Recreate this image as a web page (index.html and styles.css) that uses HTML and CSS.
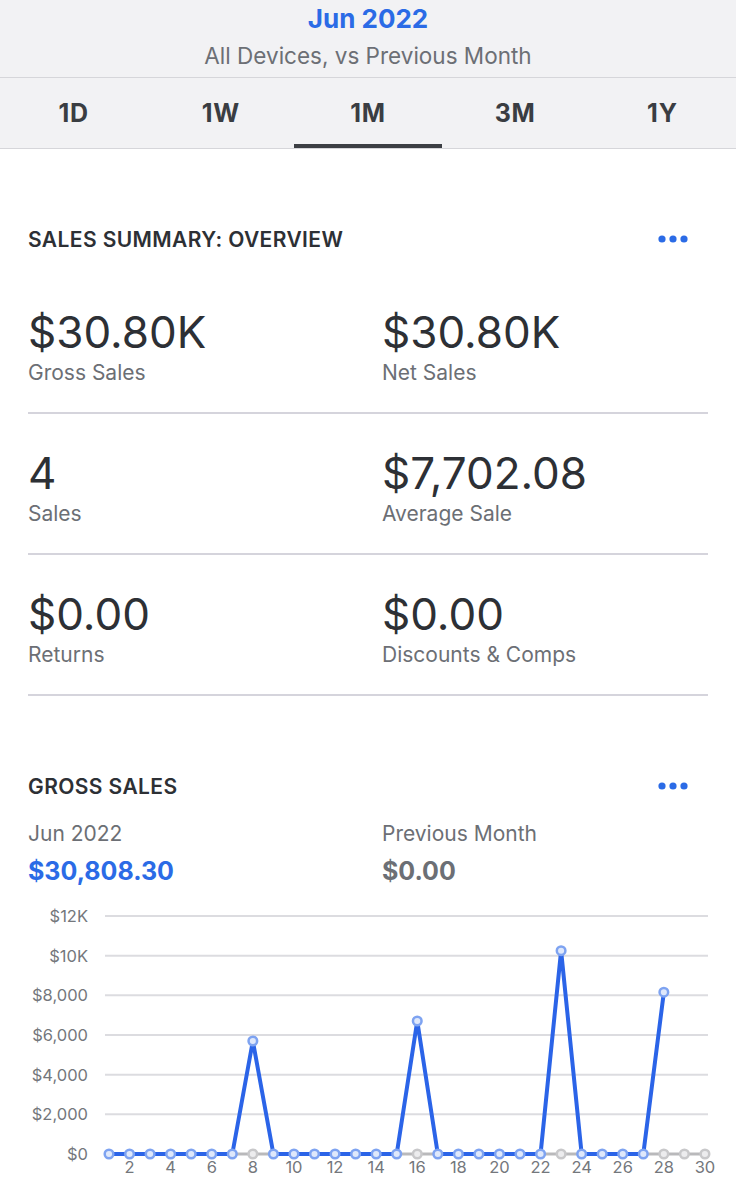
FILE: index.html
```html
<!DOCTYPE html>
<html>

<head>
  <title>Sales Summary - Jun 2022</title>
  <link rel="stylesheet" href="styles.css">
</head>

<body>
  <header class="top">
    <div class="period">
      <div class="period-title">Jun 2022</div>
      <div class="period-sub">All Devices, vs Previous Month</div>
    </div>
    <nav class="tabs">
      <button type="button">1D</button>
      <button type="button">1W</button>
      <button type="button" class="active">1M</button>
      <button type="button">3M</button>
      <button type="button">1Y</button>
    </nav>
  </header>

  <main>
    <section class="card summary">
      <div class="card-head">
        <h2>Sales Summary: Overview</h2>
        <svg class="more" width="30" height="8" viewBox="0 0 30 8">
          <circle cx="4" cy="4" r="3.6" />
          <circle cx="15" cy="4" r="3.6" />
          <circle cx="26" cy="4" r="3.6" />
        </svg>
      </div>
      <div class="metric-row">
        <div class="metric">
          <div class="metric-value">$30.80K</div>
          <div class="metric-label">Gross Sales</div>
        </div>
        <div class="metric">
          <div class="metric-value">$30.80K</div>
          <div class="metric-label">Net Sales</div>
        </div>
      </div>
      <div class="metric-row">
        <div class="metric">
          <div class="metric-value">4</div>
          <div class="metric-label">Sales</div>
        </div>
        <div class="metric">
          <div class="metric-value">$7,702.08</div>
          <div class="metric-label">Average Sale</div>
        </div>
      </div>
      <div class="metric-row">
        <div class="metric">
          <div class="metric-value">$0.00</div>
          <div class="metric-label">Returns</div>
        </div>
        <div class="metric">
          <div class="metric-value">$0.00</div>
          <div class="metric-label">Discounts &amp; Comps</div>
        </div>
      </div>
    </section>

    <section class="card gross">
      <div class="card-head">
        <h2>Gross Sales</h2>
        <svg class="more" width="30" height="8" viewBox="0 0 30 8">
          <circle cx="4" cy="4" r="3.6" />
          <circle cx="15" cy="4" r="3.6" />
          <circle cx="26" cy="4" r="3.6" />
        </svg>
      </div>
      <div class="compare">
        <div>
          <div class="compare-label">Jun 2022</div>
          <div class="compare-value current">$30,808.30</div>
        </div>
        <div>
          <div class="compare-label">Previous Month</div>
          <div class="compare-value">$0.00</div>
        </div>
      </div>
    </section>

    <svg class="chart" width="736" height="290" viewBox="0 900 736 290">
      <g class="grid">
        <line x1="105" x2="708" y1="915" y2="915" />
        <line x1="105" x2="708" y1="954.7" y2="954.7" />
        <line x1="105" x2="708" y1="994.3" y2="994.3" />
        <line x1="105" x2="708" y1="1034" y2="1034" />
        <line x1="105" x2="708" y1="1073.7" y2="1073.7" />
        <line x1="105" x2="708" y1="1113.3" y2="1113.3" />
      </g>
      <g class="y-labels">
        <text x="88" y="921">$12K</text>
        <text x="88" y="960.7">$10K</text>
        <text x="88" y="1000.3">$8,000</text>
        <text x="88" y="1040">$6,000</text>
        <text x="88" y="1079.7">$4,000</text>
        <text x="88" y="1119.3">$2,000</text>
        <text x="88" y="1159">$0</text>
      </g>
      <g class="x-labels">
        <text x="129.55" y="1172">2</text>
        <text x="170.65" y="1172">4</text>
        <text x="211.75" y="1172">6</text>
        <text x="252.85" y="1172">8</text>
        <text x="293.95" y="1172">10</text>
        <text x="335.05" y="1172">12</text>
        <text x="376.15" y="1172">14</text>
        <text x="417.25" y="1172">16</text>
        <text x="458.35" y="1172">18</text>
        <text x="499.45" y="1172">20</text>
        <text x="540.55" y="1172">22</text>
        <text x="581.65" y="1172">24</text>
        <text x="622.75" y="1172">26</text>
        <text x="663.85" y="1172">28</text>
        <text x="704.95" y="1172">30</text>
      </g>

      <!-- previous month, all zero -->
      <line class="prev-line" x1="109" x2="705" y1="1153" y2="1153" />
      <g class="prev-dots">
        <circle cx="252.85" cy="1153" r="4.3" />
        <circle cx="417.25" cy="1153" r="4.3" />
        <circle cx="561.1" cy="1153" r="4.3" />
        <circle cx="663.85" cy="1153" r="4.3" />
        <circle cx="684.4" cy="1153" r="4.3" />
        <circle cx="704.95" cy="1153" r="4.3" />
      </g>

      <!-- this month -->
      <polyline class="cur-line" points="109,1153 129.55,1153 150.1,1153 170.65,1153 191.2,1153 211.75,1153 232.3,1153 252.85,1040 273.4,1153 293.95,1153 314.5,1153 335.05,1153 355.6,1153 376.15,1153 396.7,1153 417.25,1020 437.8,1153 458.35,1153 478.9,1153 499.45,1153 520,1153 540.55,1153 561.1,949.7 581.65,1153 602.2,1153 622.75,1153 643.3,1153 663.85,991.2" />
      <g class="cur-dots">
        <circle cx="109" cy="1153" r="4.3" />
        <circle cx="129.55" cy="1153" r="4.3" />
        <circle cx="150.1" cy="1153" r="4.3" />
        <circle cx="170.65" cy="1153" r="4.3" />
        <circle cx="191.2" cy="1153" r="4.3" />
        <circle cx="211.75" cy="1153" r="4.3" />
        <circle cx="232.3" cy="1153" r="4.3" />
        <circle cx="252.85" cy="1040" r="4.3" />
        <circle cx="273.4" cy="1153" r="4.3" />
        <circle cx="293.95" cy="1153" r="4.3" />
        <circle cx="314.5" cy="1153" r="4.3" />
        <circle cx="335.05" cy="1153" r="4.3" />
        <circle cx="355.6" cy="1153" r="4.3" />
        <circle cx="376.15" cy="1153" r="4.3" />
        <circle cx="396.7" cy="1153" r="4.3" />
        <circle cx="417.25" cy="1020" r="4.3" />
        <circle cx="437.8" cy="1153" r="4.3" />
        <circle cx="458.35" cy="1153" r="4.3" />
        <circle cx="478.9" cy="1153" r="4.3" />
        <circle cx="499.45" cy="1153" r="4.3" />
        <circle cx="520" cy="1153" r="4.3" />
        <circle cx="540.55" cy="1153" r="4.3" />
        <circle cx="561.1" cy="949.7" r="4.3" />
        <circle cx="581.65" cy="1153" r="4.3" />
        <circle cx="602.2" cy="1153" r="4.3" />
        <circle cx="622.75" cy="1153" r="4.3" />
        <circle cx="643.3" cy="1153" r="4.3" />
        <circle cx="663.85" cy="991.2" r="4.3" />
      </g>
    </svg>
  </main>
</body>

</html>
```

FILE: styles.css
```css
*, *::before, *::after {
  box-sizing: border-box;
}
body {
  margin: 0;
  background: white;
  color: #2d3035;
  font-family: Inter, "Noto Sans", sans-serif;
  font-size: 21px;
}

.top {
  background: #f2f2f4;
  border-bottom: 1px solid #d6d6da;
}
.period {
  height: 78px;
  border-bottom: 1px solid #d6d6da;
  text-align: center;
  padding-top: 4px;
}
.period-title {
  color: #2b6be6;
  font-size: 26px;
  font-weight: 700;
  line-height: 30px;
}
.period-sub {
  color: #6c6f75;
  font-size: 22.5px;
  line-height: 28px;
  margin-top: 8px;
}

.tabs {
  display: grid;
  grid-template-columns: repeat(5, 1fr);
  height: 70px;
}
.tabs button {
  font: inherit;
  font-size: 25px;
  font-weight: 700;
  letter-spacing: 0.8px;
  color: #3a3d42;
  background: none;
  border: none;
  border-bottom: 4px solid transparent;
  padding: 4px 0 0;
  cursor: pointer;
}
.tabs button.active {
  border-bottom-color: #3c3f44;
}

.card {
  padding: 0 28px;
}
.card-head {
  display: flex;
  align-items: center;
  justify-content: space-between;
  height: 24px;
}
.card-head h2 {
  margin: 0;
  font-size: 21px;
  font-weight: 600;
  letter-spacing: 0.4px;
  text-transform: uppercase;
  color: #2d3035;
}
.more {
  fill: #2b6be6;
  margin-right: 20px;
}

.summary {
  padding-top: 78px;
}
.summary .card-head {
  margin-bottom: 22px;
}
.metric-row {
  display: grid;
  grid-template-columns: 354px 1fr;
  padding: 34px 0 29px;
  border-bottom: 2px solid #d5d4dc;
  height: 141px;
}
.metric-value {
  font-size: 44px;
  line-height: 50px;
  color: #2d3035;
}
.metric-label {
  margin-top: 4px;
  font-size: 21px;
  line-height: 24px;
  color: #6c6f75;
}

.gross {
  padding-top: 78px;
}
.compare {
  display: grid;
  grid-template-columns: 354px 1fr;
  margin-top: 24px;
}
.compare-label {
  font-size: 21px;
  line-height: 24px;
  color: #6c6f75;
}
.compare-value {
  margin-top: 10px;
  font-size: 25px;
  line-height: 30px;
  font-weight: 700;
  color: #6c6f75;
}
.compare-value.current {
  color: #2b6be6;
}

.chart {
  display: block;
  margin-top: 15px;
  font-family: Inter, "Noto Sans", sans-serif;
}
.grid line {
  stroke: #dcdce0;
  stroke-width: 2;
}
.y-labels text {
  font-size: 16.5px;
  fill: #74777c;
  text-anchor: end;
}
.x-labels text {
  font-size: 16.5px;
  fill: #74777c;
  text-anchor: middle;
}
.prev-line {
  stroke: #b9b9bb;
  stroke-width: 3;
}
.prev-dots circle {
  fill: #ececee;
  stroke: #c8c8ca;
  stroke-width: 2.5;
}
.cur-line {
  fill: none;
  stroke: #2b64e8;
  stroke-width: 4;
  stroke-linejoin: round;
}
.cur-dots circle {
  fill: #dfe8fb;
  stroke: #7ea3f1;
  stroke-width: 2.5;
}
```
